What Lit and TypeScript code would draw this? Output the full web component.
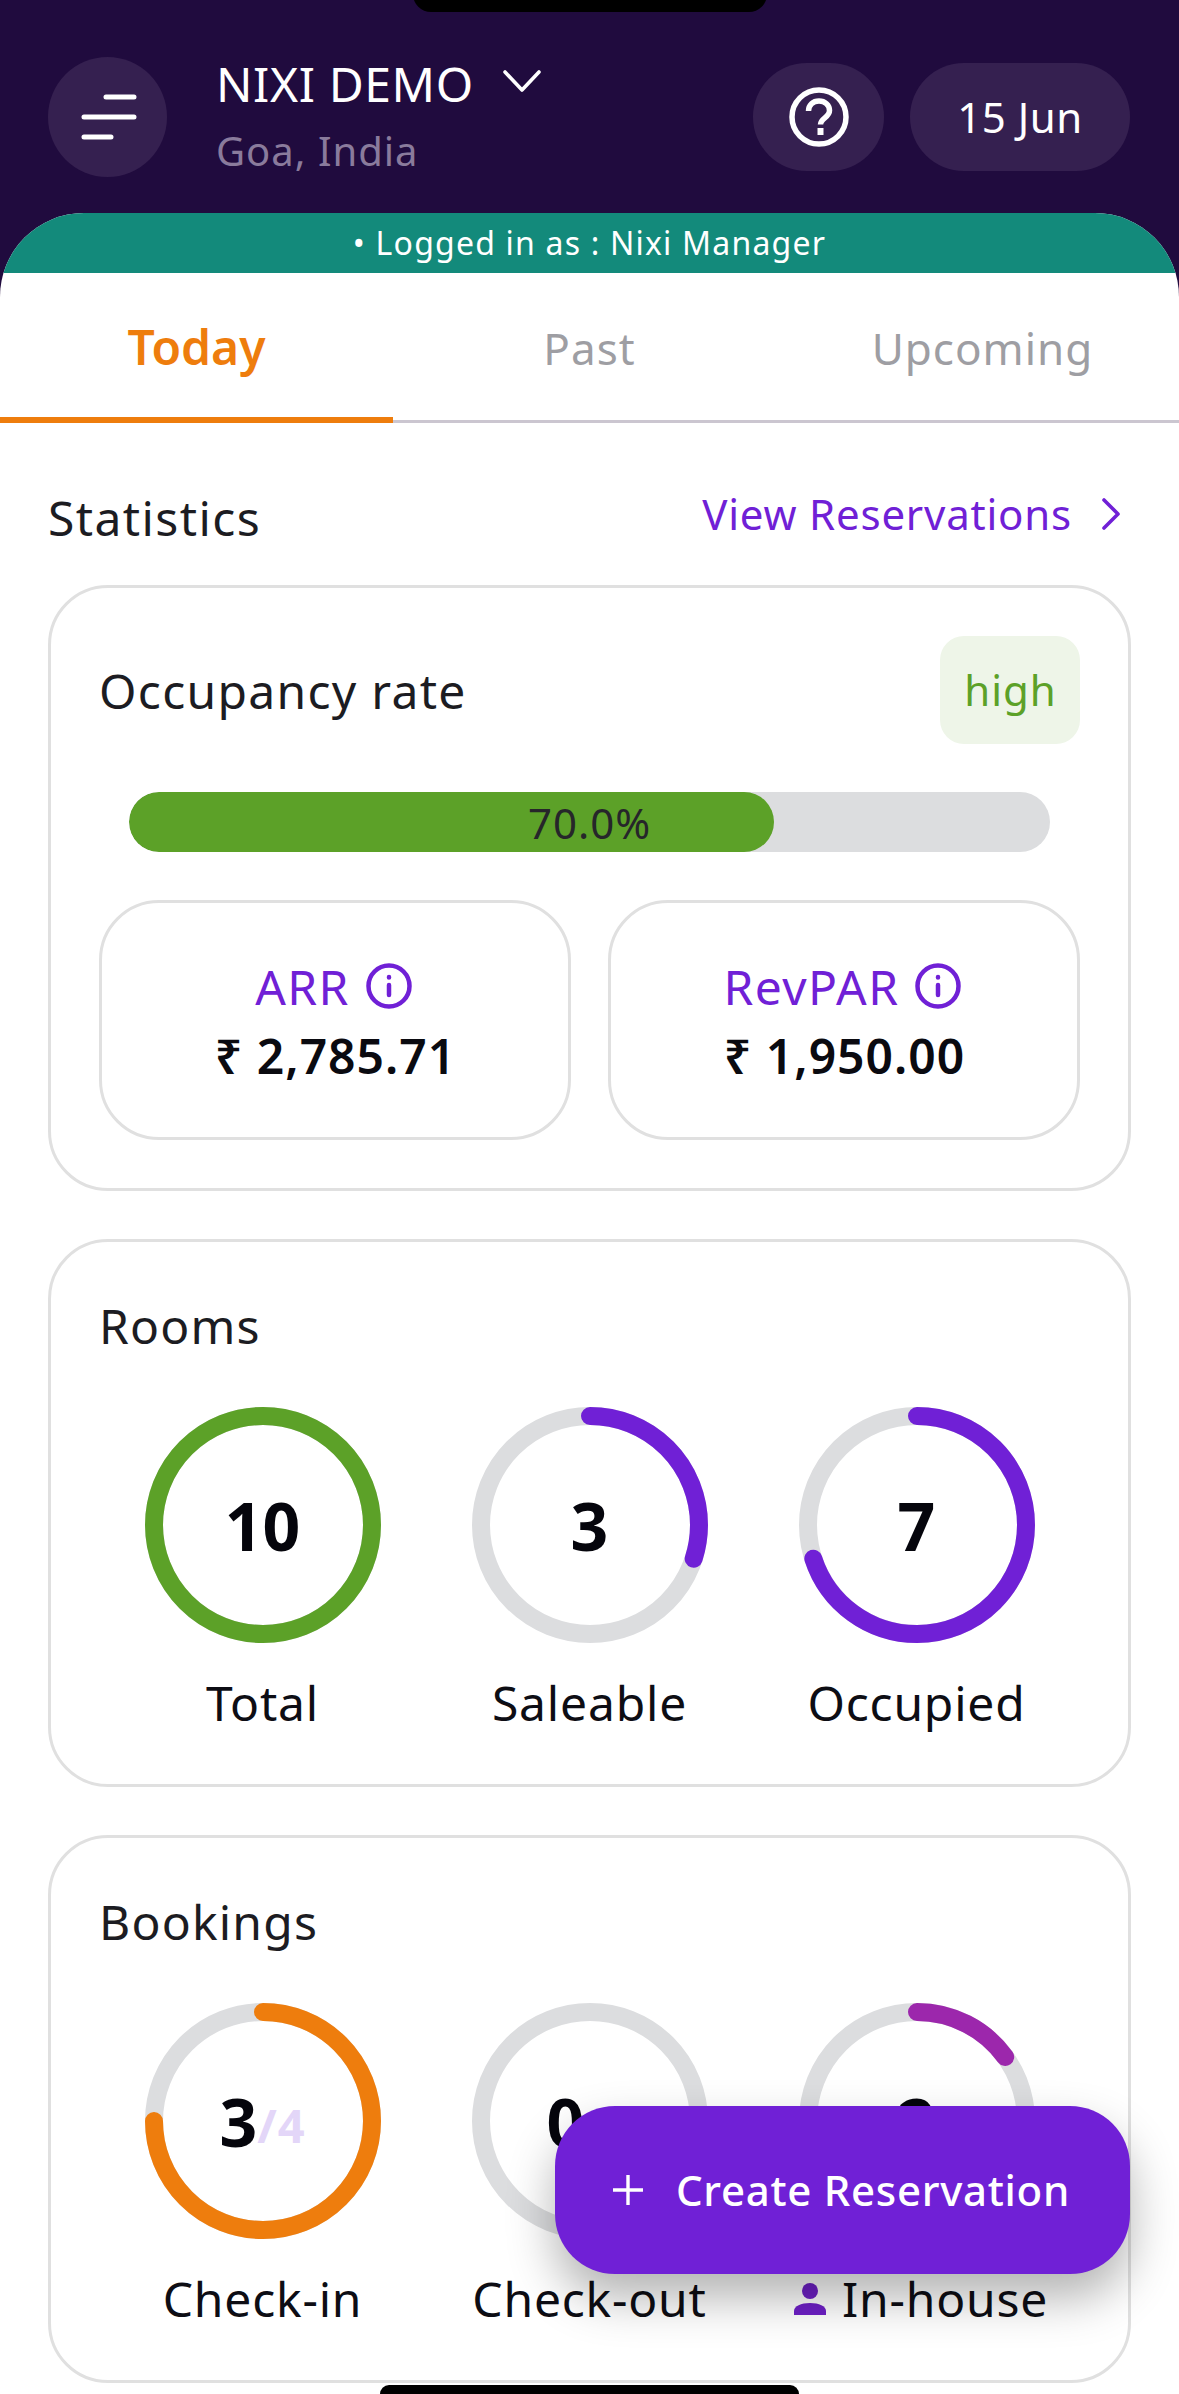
import { LitElement, html, css, svg } from "lit";
import { customElement } from "lit/decorators.js";

interface Ring { value: string; of?: string; label: string; pct: number; color: string; person?: boolean; }

const rooms: Ring[] = [
  { value: "10", label: "Total", pct: 100, color: "#5ca128" },
  { value: "3", label: "Saleable", pct: 30, color: "#7020d6" },
  { value: "7", label: "Occupied", pct: 70, color: "#7020d6" },
];
const bookings: Ring[] = [
  { value: "3", of: "/4", label: "Check-in", pct: 75, color: "#ee7d0d" },
  { value: "0", of: "/0", label: "Check-out", pct: 0, color: "#7020d6" },
  { value: "2", label: "In-house", pct: 15, color: "#9c27ac", person: true },
];

@customElement("app-root")
export class AppRoot extends LitElement {
  static styles = css`
    :host { display: block; width: 1179px; height: 2394px; position: relative; overflow: hidden; background: #200b3e; font-family: "Noto Sans", sans-serif; letter-spacing: 1.4px; color: #1c1c22; }
    .notch { position: absolute; left: 413px; top: -24px; width: 354px; height: 36px; background: #000; border-radius: 36px; }
    .homebar { position: absolute; left: 380px; bottom: 0; width: 419px; height: 9px; background: #000; border-radius: 9px 9px 0 0; }
    header { height: 213px; box-sizing: border-box; padding: 57px 49px 0 48px; display: flex; align-items: flex-start; }
    .menu { width: 119px; height: 120px; border-radius: 50%; background: #352050; display: flex; align-items: center; justify-content: center; flex: none; }
    .who { margin-left: 49px; margin-top: -7px; flex: 1; }
    .name { display: flex; align-items: center; height: 66px; font-size: 48px; color: #fff; letter-spacing: 0.6px; }
    .name svg { margin-left: 29px; margin-top: -4px; }
    .place { font-size: 40px; line-height: 70px; color: #8a7b9c; letter-spacing: 1px; }
    .pills { display: flex; gap: 26px; margin-top: 6px; }
    .pill { height: 108px; border-radius: 54px; background: #352050; display: flex; align-items: center; justify-content: center; color: #fff; font-size: 42px; }
    .help { width: 131px; }
    .date { width: 220px; letter-spacing: 0.5px; padding-bottom: 2px; box-sizing: border-box; }
    main { background: #fff; border-radius: 84px 84px 0 0; overflow: hidden; height: 2181px; }
    .banner { height: 60px; background: #138a7b; color: #fff; font-size: 32px; letter-spacing: 1.2px; display: flex; align-items: center; justify-content: center; padding-bottom: 1px; box-sizing: border-box; }
    .tabs { display: grid; grid-template-columns: repeat(3, 1fr); height: 150px; border-bottom: 3px solid #cbc6d0; box-sizing: border-box; }
    .tab { display: flex; align-items: center; justify-content: center; font-size: 44px; color: #9e9ea3; margin-bottom: -3px; box-sizing: border-box; letter-spacing: 1px; }
    .tab.on { color: #ee7d0d; font-size: 48px; font-weight: 600; border-bottom: 6px solid #ee7d0d; letter-spacing: 0; padding-top: 2px; }
    .body { padding: 58px 48px 0; display: flex; flex-direction: column; gap: 48px; }
    .head { height: 72px; display: flex; align-items: center; justify-content: space-between; margin-bottom: -16px; }
    .head h2 { margin: 0; font-size: 48px; font-weight: 400; }
    .link { display: flex; align-items: center; color: #7020d6; font-size: 42px; margin-top: -7px; padding-right: 10px; gap: 29px; letter-spacing: 0.8px; }
    .card { border: 3px solid #e0e0e0; border-radius: 60px; padding: 48px; }
    .card.rings { padding-bottom: 45px; }
    .occ { display: flex; justify-content: space-between; align-items: center; }
    .occ span { font-size: 48px; letter-spacing: 1.3px; }
    .badge { width: 140px; height: 108px; border-radius: 24px; background: #eef5e8; color: #5ca128; font-size: 42px; display: flex; align-items: center; justify-content: center; padding: 0 0 2px 1px; box-sizing: border-box; letter-spacing: 1px; }
    .bar { position: relative; height: 60px; border-radius: 30px; background: #dcdddf; margin: 48px 30px 48px; overflow: hidden; }
    .fill { height: 100%; border-radius: 30px; background: #5ca128; }
    .pct { position: absolute; inset: 0; display: flex; align-items: center; justify-content: center; font-size: 42px; color: #26262a; letter-spacing: 1px; }
    .subs { display: grid; grid-template-columns: 1fr 1fr; gap: 37px; }
    .sub { height: 240px; box-sizing: border-box; border: 3px solid #e0e0e0; border-radius: 60px; display: flex; flex-direction: column; align-items: center; justify-content: center; padding-top: 3px; }
    .sub .k { display: flex; align-items: center; gap: 16px; color: #7020d6; font-size: 48px; line-height: 68px; letter-spacing: 1.4px; padding-right: 3px; }
    .sub .k svg { margin-top: -1px; }
    .sub .v { font-size: 48px; font-weight: 600; line-height: 70px; color: #0a0a10; letter-spacing: 1px; padding-left: 1px; }
    h3 { margin: 0 0 45px; font-size: 48px; font-weight: 400; line-height: 72px; letter-spacing: 1.2px; }
    .grid { display: grid; grid-template-columns: repeat(3, 1fr); }
    .col { display: flex; flex-direction: column; align-items: center; }
    .ring { position: relative; width: 236px; height: 236px; }
    .ring svg { display: block; transform: rotate(-90deg); }
    .num { position: absolute; inset: 0; display: flex; align-items: center; justify-content: center; font-size: 66px; font-weight: 700; color: #05050c; letter-spacing: 0; }
    .of { font-size: 47px; color: #e3d6f8; align-self: center; margin-top: 8px; letter-spacing: 1px; }
    .lab { margin-top: 24px; line-height: 72px; font-size: 48px; color: #0d0d14; display: flex; align-items: center; gap: 15px; letter-spacing: 0.8px; }
    .lab.person { padding-left: 8px; }
    .fab { position: absolute; left: 555px; top: 2106px; width: 575px; height: 168px; border-radius: 60px; background: #7020d6; box-shadow: 0 24px 48px rgba(0,0,0,.3); color: #fff; font-size: 42px; font-weight: 500; letter-spacing: 0.7px; display: flex; align-items: center; padding: 0 0 2px 58px; box-sizing: border-box; gap: 33px; }
    .fab svg { margin-top: 2px; }
  `;

  private ring(r: Ring) {
    return html`<div class="col">
      <div class="ring">
        <svg width="236" height="236" viewBox="0 0 236 236" fill="none" stroke-width="18">
          ${svg`<circle cx="118" cy="118" r="109" stroke="#dcdddf"></circle>`}
          ${r.pct > 0 ? svg`<circle cx="118" cy="118" r="109" stroke=${r.color} pathLength="100" stroke-dasharray="${r.pct} 100" stroke-linecap="round"></circle>` : ""}
        </svg>
        <div class="num">${r.value}${r.of ? html`<span class="of">${r.of}</span>` : ""}</div>
      </div>
      <div class="lab ${r.person ? "person" : ""}">
        ${r.person ? html`<svg width="34" height="34" viewBox="0 0 34 34" fill="#6f20c8"><circle cx="17" cy="9" r="8"></circle><path d="M1 33v-4c0-5 7-8 16-8s16 3 16 8v4z"></path></svg>` : ""}
        ${r.label}
      </div>
    </div>`;
  }

  private info() {
    return html`<svg width="46" height="46" viewBox="0 0 46 46" fill="none" stroke="#7020d6" stroke-width="4.5" stroke-linecap="round"><circle cx="23" cy="23" r="20.5"></circle><path d="M23 22v10M23 14v.5"></path></svg>`;
  }

  render() {
    return html`
      <header>
        <div class="menu">
          <svg width="60" height="46" viewBox="0 0 60 46" fill="none" stroke="#fff" stroke-width="5" stroke-linecap="round"><path d="M28 3h28M6 23h50M6 43h27"></path></svg>
        </div>
        <div class="who">
          <div class="name">NIXI DEMO
            <svg width="38" height="22" viewBox="0 0 38 22" fill="none" stroke="#fff" stroke-width="3.6" stroke-linecap="round" stroke-linejoin="round"><path d="M2 2l17 18L36 2"></path></svg>
          </div>
          <div class="place">Goa, India</div>
        </div>
        <div class="pills">
          <div class="pill help">
            <svg width="60" height="60" viewBox="0 0 60 60" fill="none" stroke="#fff" stroke-width="5.5"><circle cx="30" cy="30" r="27"></circle><path d="M19.500 24c0-6 4.500-10 10.500-10s10.500 4 10.500 9.500c0 7-9 7.500-9 14" stroke-linejoin="round"></path><path d="M31.500 41v7" stroke-width="6"></path></svg>
          </div>
          <div class="pill date">15 Jun</div>
        </div>
      </header>
      <main>
        <div class="banner">• Logged in as : Nixi Manager</div>
        <div class="tabs">
          <div class="tab on">Today</div>
          <div class="tab">Past</div>
          <div class="tab">Upcoming</div>
        </div>
        <div class="body">
          <div class="head">
            <h2>Statistics</h2>
            <div class="link">View Reservations
              <svg width="20" height="32" viewBox="0 0 20 32" fill="none" stroke="#7020d6" stroke-width="3.6" stroke-linecap="round" stroke-linejoin="round"><path d="M3 2l14 14L3 30"></path></svg>
            </div>
          </div>
          <section class="card">
            <div class="occ"><span>Occupancy rate</span><div class="badge">high</div></div>
            <div class="bar"><div class="fill" style="width:70%"></div><div class="pct">70.0%</div></div>
            <div class="subs">
              <div class="sub"><div class="k">ARR ${this.info()}</div><div class="v">₹ 2,785.71</div></div>
              <div class="sub"><div class="k">RevPAR ${this.info()}</div><div class="v">₹ 1,950.00</div></div>
            </div>
          </section>
          <section class="card rings">
            <h3>Rooms</h3>
            <div class="grid">${rooms.map((r) => this.ring(r))}</div>
          </section>
          <section class="card rings">
            <h3>Bookings</h3>
            <div class="grid">${bookings.map((r) => this.ring(r))}</div>
          </section>
        </div>
      </main>
      <div class="notch"></div>
      <div class="fab">
        <svg width="30" height="30" viewBox="0 0 30 30" fill="none" stroke="#fff" stroke-width="3.4"><path d="M15 0v30M0 15h30"></path></svg>
        <span>Create Reservation</span>
      </div>
      <div class="homebar"></div>
    `;
  }
}
